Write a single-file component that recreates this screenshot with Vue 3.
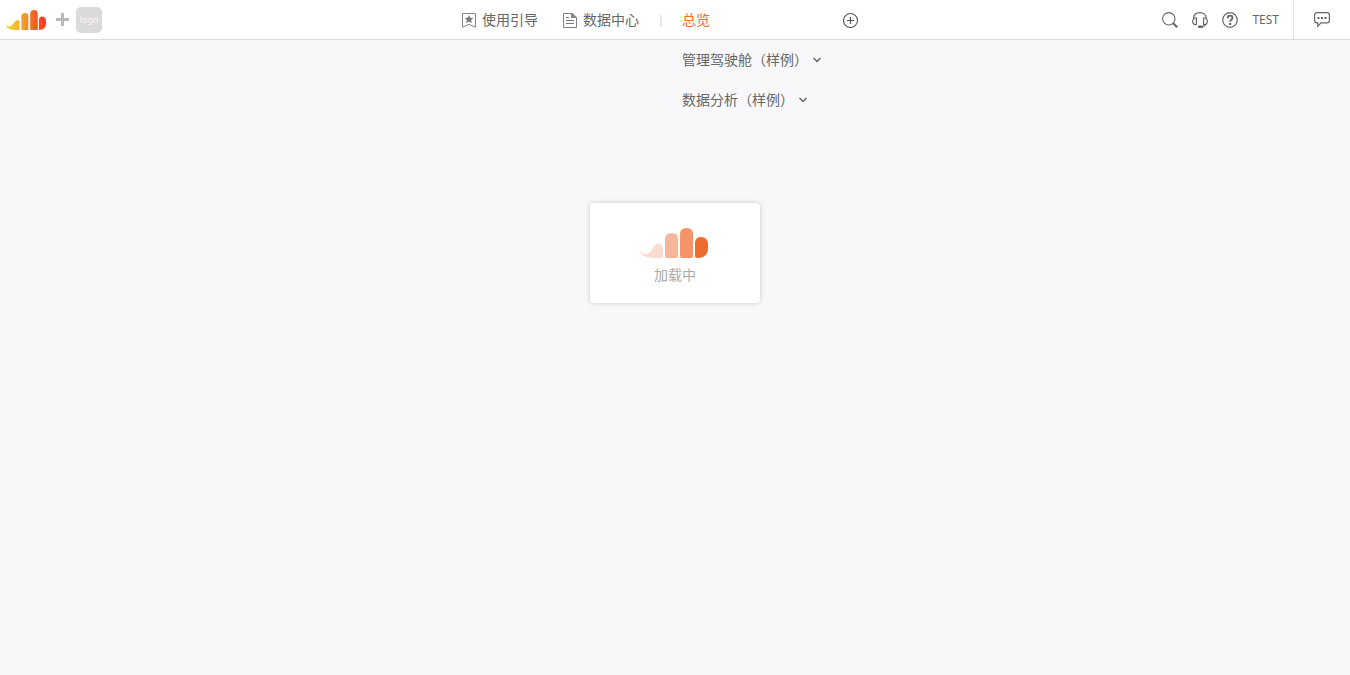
<script setup>
const tabs = [
  { label: '总览', active: true, menu: false },
  { label: '管理驾驶舱（样例）', active: false, menu: true },
  { label: '数据分析（样例）', active: false, menu: true },
]
const bars = [
  { d: 'M0 22C2 28 10 27 13 20C15 15 20 14 22 18Q23 19 23 21V28Q23 30 21 30H16C8 30 0 29 0 22Z', fill: '#fbdcd0' },
  { d: 'M25 11Q25 5 31.500 5Q38 5 38 11V28Q38 30 36 30H27Q25 30 25 28Z', fill: '#f7b69b' },
  { d: 'M40 6Q40 0 46.500 0Q53 0 53 6V28Q53 30 51 30H42Q40 30 40 28Z', fill: '#f49468' },
  { d: 'M55 14Q56 9 61 9Q68 9 68 17V20Q68 30 57 30Q55 30 55 28Z', fill: '#ee6c2e' },
]
</script>

<template>
  <div class="page">
    <header class="header">
      <div class="brand">
        <a href="#" class="brand-link" aria-label="首页">
          <svg class="brand-mark" viewBox="0 0 68 34" preserveAspectRatio="none" aria-hidden="true">
            <defs>
              <linearGradient id="brand" gradientUnits="userSpaceOnUse" x1="0" y1="0" x2="68" y2="0">
                <stop offset="0" stop-color="#f0dc26" />
                <stop offset="0.3" stop-color="#f2b72b" />
                <stop offset="0.5" stop-color="#f2922b" />
                <stop offset="0.7" stop-color="#f16228" />
                <stop offset="1" stop-color="#f8381f" />
              </linearGradient>
            </defs>
            <g fill="url(#brand)">
              <path d="M0 24C2 30 9 29 13 22Q18 15 22 18Q23 19 23 21V34H14C6 34 0 31 0 24Z" />
              <path d="M26 12Q26 5 32 5Q38 5 38 12V34H28Q26 34 26 32Z" />
              <path d="M41 7Q41 0 47.500 0Q54 0 54 7V34H43Q41 34 41 32Z" />
              <path d="M56 16Q57 11 61 11Q68 11 68 19V23Q68 34 56 34Z" />
            </g>
          </svg>
        </a>
        <svg class="plus" viewBox="0 0 13 13" aria-hidden="true"><path d="M5 0h3v5h5v3h-5v5h-3v-5h-5v-3h5z" fill="#b9b9b9" /></svg>
        <span class="client-logo">logo</span>
      </div>

      <nav class="nav">
        <a href="#" class="nav-link">
          <svg width="14" height="16" viewBox="0 0 14 16" aria-hidden="true">
            <path d="M.5 1.500h13v13.700L7 12.300.5 15.200z" fill="none" stroke="#858585" />
            <path d="M7 3l1.300 2.800 3.100.3-2.300 2 .7 3.100L7 9.600l-2.800 1.600.7-3.100-2.300-2 3.100-.3z" fill="#777" />
          </svg>
          使用引导
        </a>
        <a href="#" class="nav-link">
          <svg width="14" height="16" viewBox="0 0 14 16" aria-hidden="true">
            <path d="M8.500 1.500h-8v14h13V6" fill="none" stroke="#808080" />
            <path d="M8 1h1.500L14 5.500V6H8z" fill="#858585" />
            <path d="M3 5.500h3M3 8.500h8M3 11.500h8" stroke="#777" />
          </svg>
          数据中心
        </a>
        <span class="divider"></span>
        <ul class="tabs">
          <li v-for="tab in tabs" :key="tab.label">
            <a href="#" class="tab" :class="{ active: tab.active }">
              {{ tab.label }}
              <svg v-if="tab.menu" width="10" height="6" viewBox="0 0 10 6" aria-hidden="true"><path d="M1.500 1L5 4.500 8.500 1" fill="none" stroke="#666" stroke-width="1.500" /></svg>
            </a>
          </li>
        </ul>
        <button type="button" class="icon-button" aria-label="添加">
          <svg width="16" height="16" viewBox="0 0 16 16" aria-hidden="true">
            <circle cx="7.500" cy="8.500" r="7" fill="none" stroke="#555" stroke-width="1.100" />
            <path d="M7.500 5v7M4 8.500h7" stroke="#555" stroke-width="1.200" />
          </svg>
        </button>
      </nav>

      <div class="tools">
        <button type="button" class="icon-button" aria-label="搜索">
          <svg width="16" height="16" viewBox="0 0 16 16" aria-hidden="true">
            <circle cx="6.800" cy="6.800" r="6.200" fill="none" stroke="#666" stroke-width="1.100" />
            <path d="M11.200 11.200l4 4" stroke="#666" stroke-width="2" />
          </svg>
        </button>
        <button type="button" class="icon-button" aria-label="客服">
          <svg width="16" height="16" viewBox="0 0 16 16" fill="none" stroke="#666" stroke-width="1.200" aria-hidden="true">
            <path d="M1.700 6.500C1.700 2.500 4.500.7 8 .7s6.300 1.800 6.300 5.800" />
            <path d="M4.400 6.200C2 5.500.7 7 .7 9.300s1.300 3.900 3.700 3.200z" />
            <path d="M11.600 6.200c2.400-.7 3.700.8 3.700 3.100s-1.300 3.900-3.700 3.200z" />
            <path d="M13.500 12.500c-.5 1.500-2 2-3.500 2" />
            <rect x="6" y="13.500" width="5" height="2.500" rx="1" fill="#666" stroke="none" />
          </svg>
        </button>
        <button type="button" class="icon-button" aria-label="帮助">
          <svg width="16" height="16" viewBox="0 0 16 16" fill="none" stroke="#666" aria-hidden="true">
            <circle cx="8" cy="8" r="7.300" stroke-width="1.200" />
            <path d="M5.600 6.300C5.600 4.500 6.600 3.700 8 3.700s2.500.8 2.500 2.200C10.500 7.700 8.200 7.500 8.200 9.700" stroke-width="1.800" />
            <path d="M7.200 11h2v2h-2z" fill="#666" stroke="none" />
          </svg>
        </button>
        <a href="#" class="user">TEST</a>
        <div class="message">
          <button type="button" class="icon-button" aria-label="消息">
            <svg width="16" height="16" viewBox="0 0 16 16" aria-hidden="true">
              <path d="M3 .7h10q2.400 0 2.400 2.400v5.300q0 2.400-2.400 2.400H7L3.800 14.300v-3.500H3Q.6 10.800.6 8.400V3.100Q.6.7 3 .7z" fill="none" stroke="#666" stroke-width="1.200" />
              <path d="M3.500 5h2v2h-2zM7 5h2v2H7zM10.500 5h2v2h-2z" fill="#666" />
            </svg>
          </button>
        </div>
      </div>
    </header>

    <main class="content">
      <div class="loading" role="status">
        <svg width="70" height="30" viewBox="0 0 70 30" aria-hidden="true">
          <path v-for="bar in bars" :key="bar.fill" :d="bar.d" :fill="bar.fill" />
        </svg>
        <span>加载中</span>
      </div>
    </main>
  </div>
</template>

<style>
body {
  background: #f8f8fa;
}
</style>

<style scoped>
.page {
  min-height: 100vh;
  background: #f8f8fa;
  color: #666;
  font-family: "Noto Sans", "Noto Sans CJK SC", sans-serif;
  font-size: 14px;
  line-height: 20px;
}
a {
  color: inherit;
  text-decoration: none;
}
svg {
  display: block;
  flex: none;
}
.header {
  display: grid;
  grid-template-columns: 1fr 426px 1fr;
  grid-template-rows: 39px;
  height: 39px;
  background: #fff;
  border-bottom: 1px solid #dcdcdc;
}
.brand {
  display: flex;
  align-items: center;
  gap: 10px;
  padding-left: 6px;
}
.brand-mark {
  width: 40px;
  height: 20px;
}
.plus {
  width: 13px;
  height: 13px;
}
.client-logo {
  width: 26px;
  height: 26px;
  margin-left: -3px;
  border-radius: 5px;
  background: #dadada;
  color: #f6f6f6;
  font-size: 9px;
  line-height: 26px;
  text-align: center;
}
.nav {
  display: flex;
  align-items: flex-start;
}
.nav-link {
  display: flex;
  align-items: center;
  gap: 6px;
  height: 40px;
  margin-right: 25px;
  white-space: nowrap;
}
.divider {
  width: 2px;
  height: 12px;
  margin: 15px 20px 0 -4px;
  background: #ebe4e2;
}
.tabs {
  width: 161px;
  margin: 0;
  padding: 0;
  list-style: none;
}
.tab {
  display: flex;
  align-items: center;
  gap: 4px;
  height: 40px;
  white-space: nowrap;
}
.active {
  color: #ee6c2e;
}
.icon-button {
  display: flex;
  align-items: center;
  height: 40px;
  padding: 0;
  border: 0;
  background: none;
  cursor: pointer;
}
.tools {
  display: flex;
  justify-content: flex-end;
  gap: 14px;
}
.user {
  font-size: 12px;
  line-height: 40px;
}
.message {
  display: flex;
  justify-content: center;
  width: 56px;
  border-left: 1px solid #e4e4e4;
}
.content {
  display: flex;
  justify-content: center;
  padding-top: 163px;
}
.loading {
  display: flex;
  flex-direction: column;
  align-items: center;
  gap: 7px;
  width: 170px;
  padding: 25px 0 18px;
  border-radius: 4px;
  background: #fff;
  box-shadow: 0 0 5px rgba(0, 0, 0, 0.2);
  color: #aaa;
}
</style>
